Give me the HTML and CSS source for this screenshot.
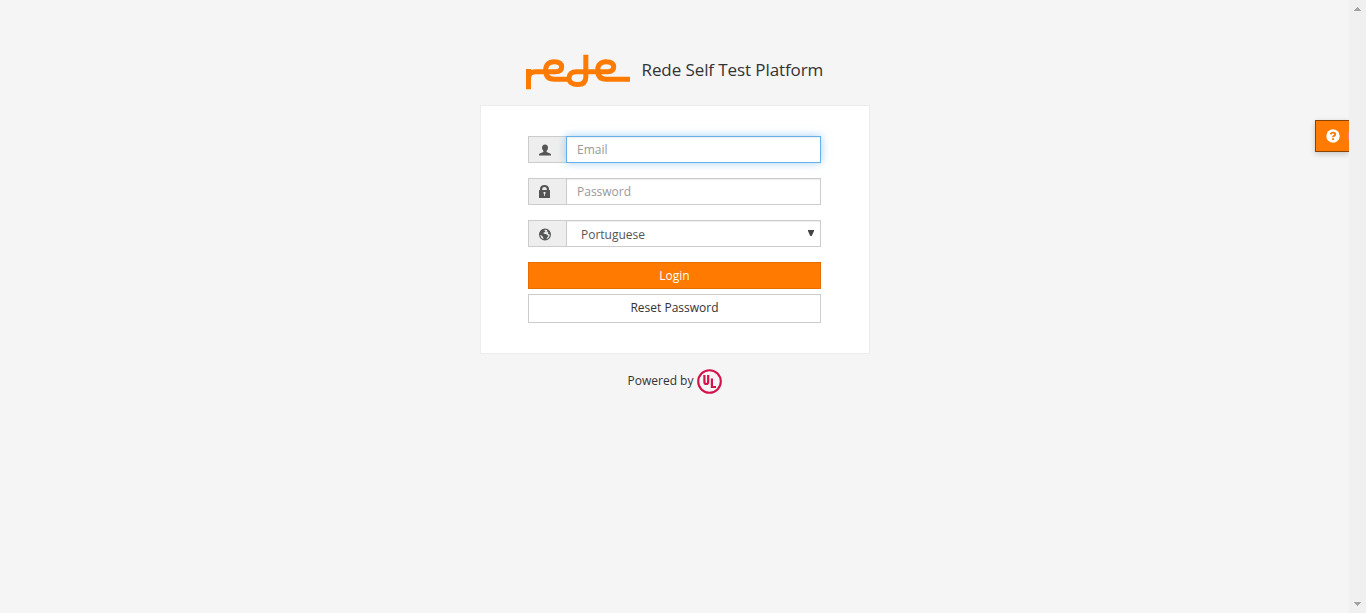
FILE: index.html
```html
<!DOCTYPE html>
<html lang="en">
<head>
<meta charset="utf-8">
<title>Rede Self Test Platform</title>
<link rel="stylesheet" href="styles.css">
</head>
<body>
<main class="page">
  <header class="brand">
    <svg class="logo" viewBox="30 27 318 108" fill="none" stroke="#ff7a00" stroke-width="15">
      <path d="M40.500 133V72M40.500 100C40.500 86 48 80 62 80H122C134 80 140 75 140 66C140 55 131 50.500 117 50.500C101 50.500 92 60 92 76C92 94 101 103 118 103H162"/>
      <path d="M212.500 29V96C212.500 111 205 118.500 188 118.500C171 118.500 162 111 162 99C162 87 170 80 184 80H278C290 80 296 75 296 66C296 55 287 50.500 273 50.500C257 50.500 248 60 248 76C248 94 257 103 274 103H345"/>
    </svg>
    <h1 class="title">Rede Self Test Platform</h1>
  </header>
  <form class="card">
    <div class="field">
      <span class="addon"><svg class="icon" viewBox="0 0 12 13"><path d="M6 .5C8 .5 9 1.800 9 3.700C9 5.200 8.300 6.100 7.600 7V8L11.200 9.500Q12 9.900 12 10.800V11.500H0V10.800Q0 9.900 .8 9.500L4.400 8V7C3.700 6.100 3 5.200 3 3.700C3 1.800 4 .5 6 .5Z"/></svg></span>
      <input class="control focused" type="text" placeholder="Email">
    </div>
    <div class="field">
      <span class="addon"><svg class="icon lock" viewBox="0 0 12 13"><path fill-rule="evenodd" d="M1 5V3.800C1 1.500 2.800 0 5.500 0S10 1.500 10 3.800V5H10.500Q11 5 11 5.500V12.500Q11 13 10.500 13H.5Q0 13 0 12.500V5.500Q0 5 .5 5ZM3.200 5H7.800V3.900Q7.800 2 5.500 2T3.200 3.900ZM4.500 7V8.500L5.100 9V11H5.900V9L6.500 8.500V7Z"/></svg></span>
      <input class="control" type="password" placeholder="Password">
    </div>
    <div class="field">
      <span class="addon"><svg class="icon globe" viewBox="0 0 12 12"><circle cx="6" cy="6" r="5.400" fill="#e8ecee" stroke="#555" stroke-width="1.100"/><path d="M6.500 .5L5.200 2L6.600 2.700L5.500 3.700L4.500 4.300L4.800 5.300L6.500 5.500L8.600 6.500L9.300 7.500L8 9.200L7 11.400L4.600 11L4 8.500L2.300 6.800L.6 6.500L.6 4.500L2.500 1.500ZM8.500 1.300L10.600 3L11.400 5.700L10.500 6L9 5.300L9.200 3.800L7.800 2.800Z"/></svg></span>
      <div class="control select"><span>Portuguese</span><svg class="arrow" viewBox="0 0 6 6"><path d="M0 0H6V1L3.700 6H2.300L0 1Z"/></svg></div>
    </div>
    <button class="button primary" type="button">Login</button>
    <button class="button" type="button">Reset Password</button>
  </form>
  <footer class="powered">
    <span>Powered by</span>
    <svg class="ul" viewBox="0 0 25 25" fill="none" stroke="#d4114b"><circle cx="12.500" cy="12.500" r="11.300" stroke-width="2.100"/><path stroke-width="2.200" d="M7.400 6V13Q7.400 15 9.300 15T11.200 13V6M14.900 9.500V18H19"/></svg>
  </footer>
  <aside class="help">
    <svg class="help-icon" viewBox="0 0 14 14"><circle cx="7" cy="7" r="6.700" fill="#fff"/><path fill="none" stroke="#ff7a00" stroke-width="1.900" d="M4.700 5.300Q4.900 3.600 7 3.600T9.200 5.200Q9.200 6.200 8 6.800Q7 7.300 7 8.300M7 9.200V11"/></svg>
    <span class="help-edge"></span>
  </aside>
</main>
<div class="scrollbar">
  <svg class="tick" viewBox="0 0 7 4"><path d="M3 0H4V1H5V2H6V3H7V4H0V3H1V2H2V1H3Z"/></svg>
  <svg class="tick" viewBox="0 0 7 4"><path d="M0 0H7V1H6V2H5V3H4V4H3V3H2V2H1V1H0Z"/></svg>
</div>
</body>
</html>
```
FILE: styles.css
```css
* { box-sizing: border-box; }
body {
  margin: 0;
  height: 613px;
  display: flex;
  overflow: hidden;
  background: #f5f5f5;
  color: #333;
  font: 12px/18px "Open Sans", sans-serif;
}
svg { display: block; flex: none; }
.page {
  position: relative;
  width: 1349px;
  display: flex;
  flex-direction: column;
  align-items: center;
  padding-top: 54px;
}
.brand {
  width: 300px;
  height: 51px;
  display: flex;
  align-items: flex-start;
  gap: 11px;
}
.logo { width: 106px; height: 36px; }
.title {
  margin: 4px 0 0;
  font-size: 17px;
  line-height: 24px;
  font-weight: 400;
  letter-spacing: -.09px;
  white-space: nowrap;
}
.card {
  width: 390px;
  height: 249px;
  padding: 30px 48px;
  background: #fff;
  border: 1px solid #ececec;
}
.field { display: flex; width: 293px; height: 27px; margin: 0 0 15px -1px; }
.addon {
  width: 38px;
  flex: none;
  padding-left: 10px;
  display: flex;
  align-items: center;
  background: #eee;
  border: 1px solid #ccc;
  border-right: 0;
}
.icon { width: 12px; height: 13px; fill: #555; margin-top: 2px; }
.lock { margin-top: 0; }
.globe { margin-top: 1px; }
.control {
  flex: 1;
  min-width: 0;
  height: 27px;
  padding: 0 10px 0 10.500px;
  border: 1px solid #ccc;
  border-radius: 0;
  outline: 0;
  background: #fff;
  box-shadow: inset 0 1px 1px rgba(0, 0, 0, .075);
  color: #555;
  font: inherit;
}
.control::placeholder { color: #999; opacity: 1; }
.focused {
  border-color: #66afe9;
  box-shadow: inset 0 1px 1px rgba(0, 0, 0, .075), 0 0 8px rgba(102, 175, 233, .6);
}
.select {
  display: flex;
  justify-content: space-between;
  padding: 5px 6px 0 14.500px;
}
.arrow { width: 6px; height: 6px; margin-top: 4px; fill: #444; }
.button {
  display: block;
  width: 293px;
  height: 29px;
  margin: 0 0 0 -1px;
  padding: 0 0 2px 1px;
  border: 1px solid #ccc;
  border-radius: 0;
  background: #fff;
  color: #333;
  font: inherit;
}
.primary {
  height: 27px;
  margin-bottom: 5px;
  padding: 0 0 0 1px;
  background: #ff7a00;
  border-color: #e66e00;
  color: #fff;
}
.powered { display: flex; align-items: center; gap: 3.500px; margin-top: 15px; padding-left: .5px; }
.powered span { margin-top: -2px; }
.ul { width: 25px; height: 25px; }
.help {
  position: absolute;
  top: 120px;
  right: 0;
  width: 34px;
  height: 32px;
  display: flex;
  align-items: center;
  justify-content: space-between;
  padding-left: 9.500px;
  background: #ff7a00;
  border: 1px solid #8a4300;
  border-right: 0;
  box-shadow: 0 2px 6px rgba(0, 0, 0, .2);
}
.help-icon { width: 14px; height: 14px; }
.help-edge { width: 1px; height: 8px; background: #ff7f73; }
.scrollbar {
  position: relative;
  width: 17px;
  display: flex;
  flex-direction: column;
  align-items: center;
  justify-content: space-between;
  padding: 7px 0;
  background: #f0f0f0;
}
.tick { width: 7px; height: 4px; fill: #a3a3a3; }
```
